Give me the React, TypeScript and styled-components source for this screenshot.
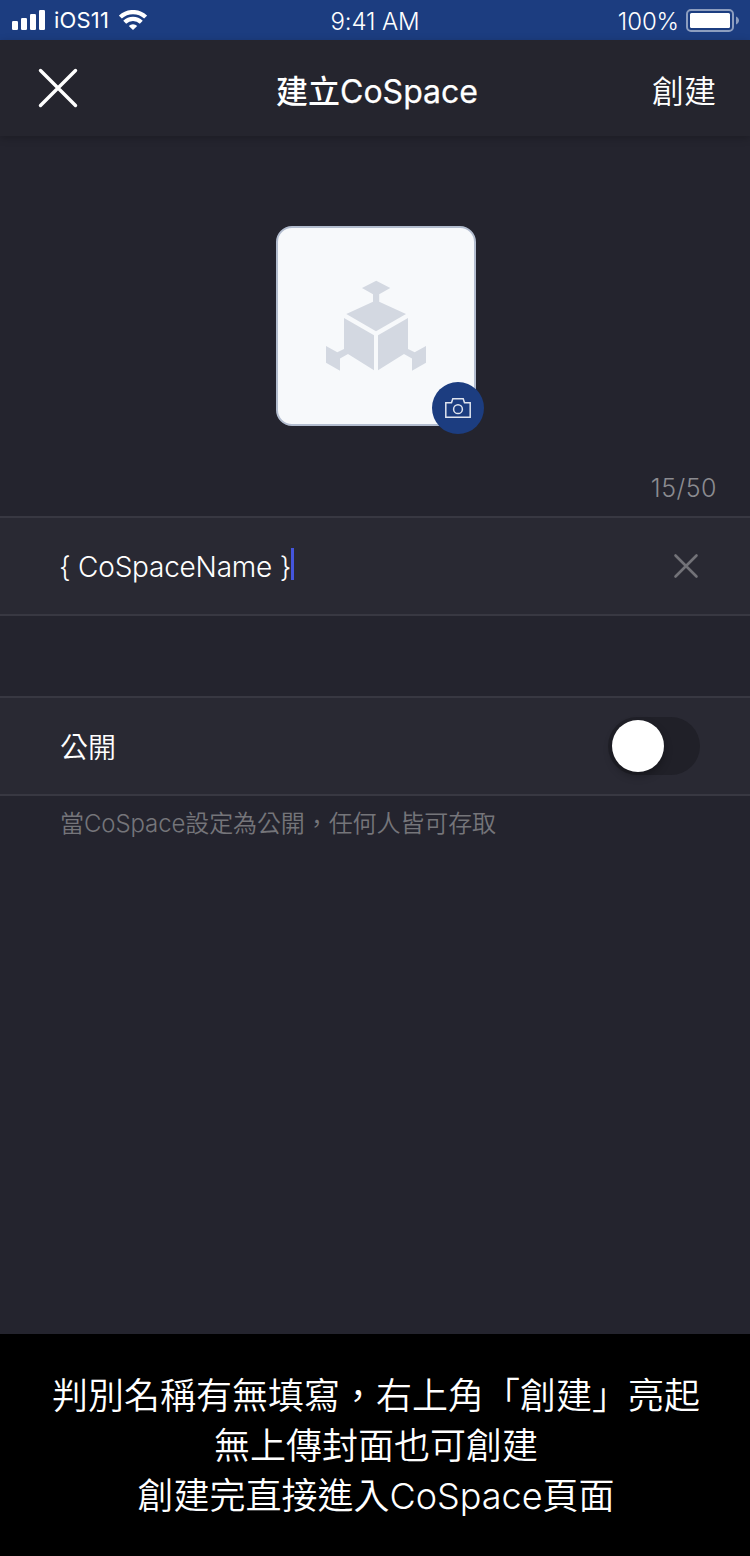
import React from "react";
import styled, { createGlobalStyle } from "styled-components";

const GlobalStyle = createGlobalStyle`
  * { box-sizing: border-box; }
  body { margin: 0; background: #24242e; }
`;

const Screen = styled.main`
  width: 750px;
  height: 1556px;
  display: flex;
  flex-direction: column;
  background: #24242e;
  color: #fff;
  font-family: Inter, "Noto Sans CJK TC", sans-serif;
  font-weight: 350;
  white-space: nowrap;
  overflow: hidden;
`;

const StatusBar = styled.div`
  height: 40px;
  flex: none;
  display: grid;
  grid-template-columns: 1fr auto 1fr;
  align-items: center;
  padding: 0 12px;
  background: #1c3d80;
`;

const StatusGroup = styled.div<{ $end?: boolean }>`
  display: flex;
  align-items: center;
  justify-content: ${(p) => (p.$end ? "flex-end" : "flex-start")};
`;

const Carrier = styled.span`
  margin: 0 10px 0 8px;
  font-size: 22px;
  line-height: 40px;
  font-weight: 400;
  letter-spacing: 0.2px;
`;

const Clock = styled.span`
  padding-top: 4px;
  font-size: 24px;
  line-height: 36px;
  font-weight: 300;
  letter-spacing: -0.1px;
`;

const Percent = styled(Clock)`
  margin-right: 7px;
`;

const Battery = styled.svg`
  margin-right: -1px;
`;

const Header = styled.header`
  height: 96px;
  flex: none;
  display: grid;
  grid-template-columns: 1fr auto 1fr;
  align-items: center;
  padding: 0 34px 0 38px;
  background: #25252e;
  box-shadow: 0 2px 8px rgba(0, 0, 0, 0.22);
`;

const IconButton = styled.button`
  display: flex;
  padding: 0;
  border: 0;
  background: none;
  color: inherit;
`;

const Title = styled.h1`
  margin: 0;
  padding-top: 7px;
  font-size: 32px;
  line-height: 48px;
  font-weight: 500;
`;

const TitleLatin = styled.span`
  font-weight: 400;
  -webkit-text-stroke: 0.25px #fff;
`;

const CreateButton = styled.button`
  justify-self: end;
  padding: 8px 0 0;
  border: 0;
  background: none;
  color: #fff;
  font: inherit;
  font-size: 32px;
  line-height: 48px;
`;

const CoverSection = styled.section`
  height: 380px;
  flex: none;
  display: flex;
  flex-direction: column;
  align-items: center;
  padding-top: 90px;
`;

const Cover = styled.div`
  position: relative;
  width: 200px;
  height: 200px;
  margin-left: 2px;
  border: 2px solid #b3bdcf;
  border-radius: 16px;
  background: #f7f9fb;
`;

const Logo = styled.svg`
  display: block;
  margin: -2px;
`;

const CameraBadge = styled.button`
  position: absolute;
  right: -10px;
  bottom: -10px;
  width: 52px;
  height: 52px;
  display: flex;
  align-items: center;
  justify-content: center;
  padding: 0;
  border: 0;
  border-radius: 50%;
  background: #1c3d80;
`;

const Counter = styled.span`
  align-self: flex-end;
  margin: 44px 33px 0 0;
  color: #8b8b90;
  font-size: 25px;
  line-height: 36px;
  letter-spacing: 0.5px;
`;

const Row = styled.div<{ $gap?: number }>`
  height: 100px;
  flex: none;
  display: flex;
  align-items: center;
  justify-content: space-between;
  margin-top: ${(p) => p.$gap ?? 0}px;
  padding: 0 50px 0 60px;
  border: solid #383842;
  border-width: 2px 0;
  background: #292933;
`;

const NameField = styled.div`
  display: flex;
  align-items: center;
  margin-left: -1px;
`;

const NameText = styled.span`
  padding-top: 2px;
  font-size: 28px;
  line-height: 40px;
  letter-spacing: -0.22px;
`;

const Caret = styled.i`
  width: 3px;
  height: 32px;
  margin-bottom: 4px;
  background: #4455dc;
`;

const RowLabel = styled.span`
  padding-top: 3px;
  font-size: 28px;
  line-height: 40px;
`;

const Toggle = styled.button`
  width: 92px;
  height: 58px;
  display: flex;
  align-items: center;
  padding: 0 4px;
  border: 0;
  border-radius: 29px;
  background: #202028;
`;

const Knob = styled.span`
  width: 52px;
  height: 52px;
  border-radius: 50%;
  background: #fff;
  box-shadow: 0 4px 8px rgba(0, 0, 0, 0.3);
`;

const Hint = styled.p`
  margin: 10px 60px 0;
  color: #75757a;
  font-size: 24px;
  line-height: 36px;
  letter-spacing: -0.1px;
`;

const Note = styled.footer`
  height: 222px;
  flex: none;
  margin-top: auto;
  padding: 37px 0 0 2px;
  background: #000;
  text-align: center;
  font-size: 36px;
  line-height: 50px;
`;

const NoteLine = styled.div``;

export default function App() {
  return (
    <Screen>
      <GlobalStyle />
      <StatusBar>
        <StatusGroup>
          <svg width="34" height="20" viewBox="0 0 34 20" fill="#fff">
            <rect x="0" y="11" width="6" height="9" rx="1.2" />
            <rect x="9" y="8" width="6" height="12" rx="1.2" />
            <rect x="18" y="4" width="6" height="16" rx="1.2" />
            <rect x="27" y="0" width="6" height="20" rx="1.2" />
          </svg>
          <Carrier>iOS11</Carrier>
          <svg width="28" height="20" viewBox="0 0 28 20" fill="none" stroke="#fff" strokeWidth="4.2">
            <path d="M1.4 7.1a18.2 18.2 0 0 1 25.2 0" />
            <path d="M5.7 12.3a11.9 11.9 0 0 1 16.6 0" />
            <path d="M14 20l-4.2-4.1a6 6 0 0 1 8.4 0z" fill="#fff" stroke="none" />
          </svg>
        </StatusGroup>
        <Clock>9:41 AM</Clock>
        <StatusGroup $end>
          <Percent>100%</Percent>
          <Battery width="53" height="24" viewBox="0 0 53 24">
            <rect x="1" y="2" width="46" height="21" rx="4" fill="none" stroke="#8d9ebf" strokeWidth="2" />
            <rect x="4" y="5" width="40" height="15" rx="1.5" fill="#fff" />
            <path d="M50 8.5c4 2 4 6 0 8z" fill="#8d9ebf" />
          </Battery>
        </StatusGroup>
      </StatusBar>

      <Header>
        <IconButton aria-label="關閉">
          <svg width="40" height="40" viewBox="0 0 40 40" stroke="#fff" strokeWidth="3.4" strokeLinecap="round">
            <path d="M2.5 2.5l35 35M37.5 2.5l-35 35" />
          </svg>
        </IconButton>
        <Title>
          建立<TitleLatin>CoSpace</TitleLatin>
        </Title>
        <CreateButton>創建</CreateButton>
      </Header>

      <CoverSection>
        <Cover>
          <Logo width="200" height="200" viewBox="0 0 200 200" fill="#d3d8e1">
            <path d="M100.2 54.8L114.3 62L103.2 68.3V75.7L130 88L100 105.3L70.3 88L97 75.7V68.3L86 62Z" />
            <path d="M68 92L98 109.3V144.3L72 128L64 132.5V144.7L50 136.7V120L61.3 126.3L68 123Z" />
            <path d="M132 92L102 109.3V144.3L128 128L136 132.5V144.7L150 136.7V120L138.7 126.3L132 123Z" />
          </Logo>
          <CameraBadge aria-label="上傳封面">
            <svg width="26" height="20" viewBox="0 0 26 20" fill="none" stroke="#dfe4ee" strokeWidth="1.5">
              <path d="M.8 4.8H6.5L7.8 .8H18.2L19.5 4.8H25.2V19.2H.8Z" />
              <circle cx="13" cy="11.2" r="4.4" />
            </svg>
          </CameraBadge>
        </Cover>
        <Counter>15/50</Counter>
      </CoverSection>

      <Row>
        <NameField>
          <NameText>{"{ CoSpaceName }"}</NameText>
          <Caret />
        </NameField>
        <IconButton aria-label="清除">
          <svg width="28" height="28" viewBox="0 0 28 28" stroke="#727278" strokeWidth="2.6" strokeLinecap="round">
            <path d="M3.5 3.5l21 21M24.5 3.5l-21 21" />
          </svg>
        </IconButton>
      </Row>

      <Row $gap={80}>
        <RowLabel>公開</RowLabel>
        <Toggle role="switch" aria-checked={false} aria-label="公開">
          <Knob />
        </Toggle>
      </Row>
      <Hint>當CoSpace設定為公開，任何人皆可存取</Hint>

      <Note>
        <NoteLine>判別名稱有無填寫，右上角「創建」亮起</NoteLine>
        <NoteLine>無上傳封面也可創建</NoteLine>
        <NoteLine>創建完直接進入CoSpace頁面</NoteLine>
      </Note>
    </Screen>
  );
}
